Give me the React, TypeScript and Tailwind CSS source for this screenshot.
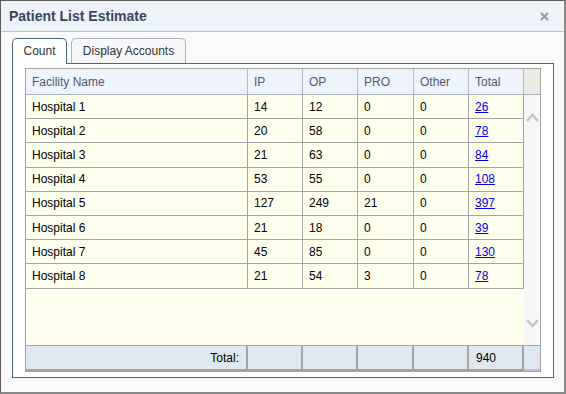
import React from "react";

const ROWS = [
  { name: "Hospital 1", ip: 14, op: 12, pro: 0, other: 0, total: 26 },
  { name: "Hospital 2", ip: 20, op: 58, pro: 0, other: 0, total: 78 },
  { name: "Hospital 3", ip: 21, op: 63, pro: 0, other: 0, total: 84 },
  { name: "Hospital 4", ip: 53, op: 55, pro: 0, other: 0, total: 108 },
  { name: "Hospital 5", ip: 127, op: 249, pro: 21, other: 0, total: 397 },
  { name: "Hospital 6", ip: 21, op: 18, pro: 0, other: 0, total: 39 },
  { name: "Hospital 7", ip: 45, op: 85, pro: 0, other: 0, total: 130 },
  { name: "Hospital 8", ip: 21, op: 54, pro: 3, other: 0, total: 78 },
];

// cell widths include the 1px right border
const COLS = ["w-[222px]", "w-[55px]", "w-[55px]", "w-[56px]", "w-[55px]", "w-[55px]"];
const HEADERS = ["Facility Name", "IP", "OP", "PRO", "Other", "Total"];

function Chevron({ up }: { up?: boolean }) {
  return (
    <svg width="13" height="9" viewBox="0 0 13 9" className="block">
      <path
        d={up ? "M1 8 L6.5 2 L12 8" : "M1 1 L6.5 7 L12 1"}
        fill="none"
        stroke="#c4c4c4"
        strokeWidth="2.2"
      />
    </svg>
  );
}

export default function App() {
  return (
    <div className="flex h-[394px] w-[566px] flex-col border-t border-l border-r-2 border-b-2 border-t-[#5c5c5c] border-l-[#5c5c5c] border-r-[#8a8a8a] border-b-[#8a8a8a] bg-[#fafafa] font-['Liberation_Sans',Arial,sans-serif] text-[12px]">
      <div className="flex h-[31px] shrink-0 items-center justify-between border-b border-[#b4c0ce] bg-[#eef3f9] pl-[8px] pr-[15px]">
        <span className="text-[14px] font-bold text-[#3a475a]">Patient List Estimate</span>
        <svg width="9" height="9" viewBox="0 0 9 9" className="mt-[1px]">
          <path d="M1 1 L8 8 M8 1 L1 8" stroke="#8e97a2" strokeWidth="2" />
        </svg>
      </div>

      <div className="pl-[11px] pt-[6px]">
        <div className="flex items-end gap-[4px]">
          <div className="relative z-10 -mb-px flex h-[26px] w-[55px] items-center justify-center rounded-t-[5px] border border-b-0 border-[#4a6680] bg-white pb-[1px] text-[#333]">
            Count
          </div>
          <div className="flex h-[25px] w-[115px] items-center justify-center rounded-t-[5px] border border-b-0 border-[#aab4c1] bg-[#f6f7f9] text-[#333]">
            Display Accounts
          </div>
        </div>

        <div className="h-[315px] w-[542px] border border-[#4a6680] bg-white pl-[12px] pt-[4px]">
          <div className="w-[516px] border border-[#a3a3a3]">
            {/* header */}
            <div className="flex h-[26px] border-b border-[#a8b0bd] bg-[#eff3fc] text-[#4f5a69]">
              {HEADERS.map((h, i) => (
                <div key={h} className={`${COLS[i]} flex items-center border-r border-[#b3bac6] pl-[6px]`}>
                  {h}
                </div>
              ))}
              <div className="w-[16px] bg-[#ebebe4]" />
            </div>

            {/* body */}
            <div className="flex h-[250px]">
              <div className="w-[498px] bg-[#ffffee]">
                {ROWS.map((r) => (
                  <div key={r.name} className="flex h-[24.2px] text-black">
                    {[r.name, r.ip, r.op, r.pro, r.other].map((v, i) => (
                      <div
                        key={i}
                        className={`${COLS[i]} flex items-center border-r border-b border-[#a5a5a5] pl-[6px]`}
                      >
                        {v}
                      </div>
                    ))}
                    <div className={`${COLS[5]} flex items-center border-r border-b border-[#a5a5a5] pl-[6px]`}>
                      <a className="text-[#0000ee] underline">{r.total}</a>
                    </div>
                  </div>
                ))}
              </div>
              <div className="flex w-[16px] flex-col items-center justify-between bg-[#f7f7f7] pt-[18px] pb-[17px]">
                <Chevron up />
                <Chevron />
              </div>
            </div>

            {/* footer */}
            <div className="flex h-[26px] border-t border-[#a5a5a5] bg-[#dfe7f1] text-black">
              <div className={`${COLS[0]} flex items-center justify-end border-r-2 border-b-2 border-[#a3a3a3] pr-[7px]`}>
                Total:
              </div>
              <div className={`${COLS[1]} border-r-2 border-b-2 border-[#a3a3a3]`} />
              <div className={`${COLS[2]} border-r-2 border-b-2 border-[#a3a3a3]`} />
              <div className={`${COLS[3]} border-r-2 border-b-2 border-[#a3a3a3]`} />
              <div className={`${COLS[4]} border-r-2 border-b-2 border-[#a3a3a3]`} />
              <div className={`${COLS[5]} flex items-center border-r-2 border-b-2 border-[#a3a3a3] pl-[7px]`}>
                940
              </div>
              <div className="w-[16px] border-b-2 border-[#b7c2d0]" />
            </div>
          </div>
        </div>
      </div>
    </div>
  );
}
